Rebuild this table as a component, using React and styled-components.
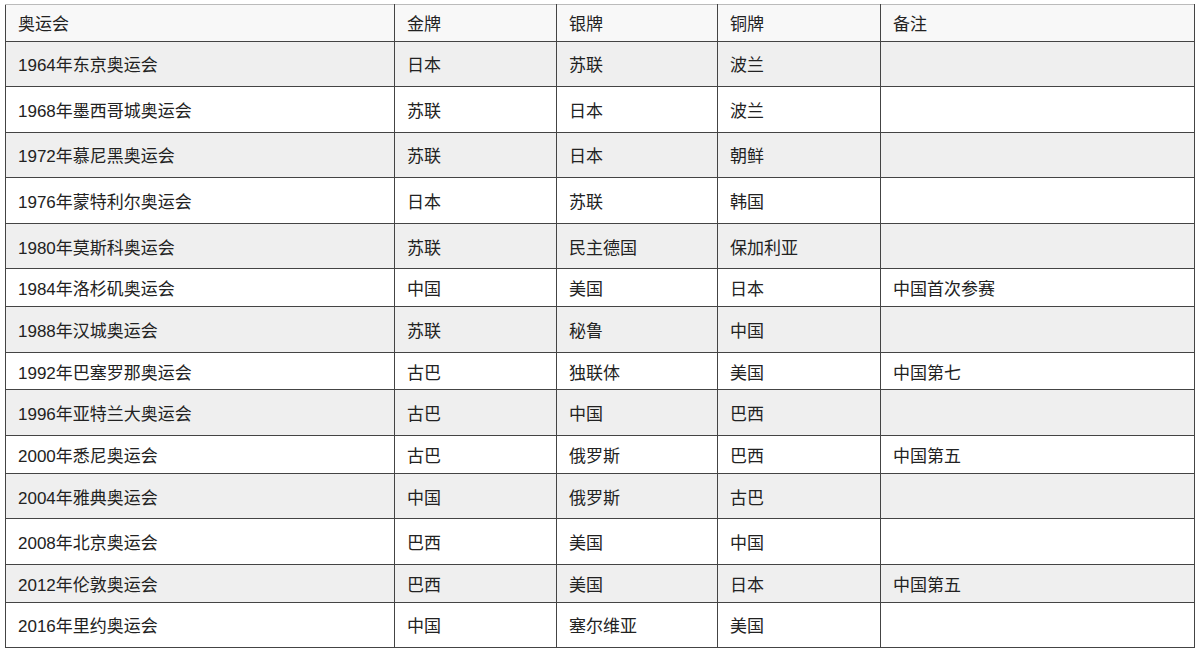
import React from 'react';
import styled, { createGlobalStyle } from 'styled-components';

const GlobalStyle = createGlobalStyle`
  html, body {
    margin: 0;
    padding: 0;
    background: #ffffff;
  }
  body {
    font-family: "Liberation Sans", "Noto Sans CJK SC", sans-serif;
    color: #222222;
  }
`;

const Page = styled.div`
  padding: 4px 6px 0 5px;
`;

const Table = styled.table`
  width: 1189px;
  border-collapse: collapse;
  table-layout: fixed;
  font-size: 17px;
  border: 1px solid #555555;
`;

const HeadRow = styled.tr`
  height: 36.5px;
  background: #f8f8f8;
`;

const Row = styled.tr`
  height: ${(p) => (p.$tall ? '45.6px' : '37.7px')};
  background: ${(p) => (p.$striped ? '#efefef' : '#ffffff')};
`;

const Th = styled.th`
  text-align: left;
  font-weight: 400;
  padding: 0 12px;
  border: 1px solid #444444;
  border-top-color: #bbbbbb;
  color: #222222;
`;

const Td = styled.td`
  padding: 0 12px;
  border: 1px solid #444444;
  color: #222222;
  white-space: nowrap;
`;

const columns = [
  { label: '奥运会', width: 389 },
  { label: '金牌', width: 162 },
  { label: '银牌', width: 161 },
  { label: '铜牌', width: 163 },
  { label: '备注', width: 314 },
];

const games = [
  ['1964年东京奥运会', '日本', '苏联', '波兰', ''],
  ['1968年墨西哥城奥运会', '苏联', '日本', '波兰', ''],
  ['1972年慕尼黑奥运会', '苏联', '日本', '朝鲜', ''],
  ['1976年蒙特利尔奥运会', '日本', '苏联', '韩国', ''],
  ['1980年莫斯科奥运会', '苏联', '民主德国', '保加利亚', ''],
  ['1984年洛杉矶奥运会', '中国', '美国', '日本', '中国首次参赛'],
  ['1988年汉城奥运会', '苏联', '秘鲁', '中国', ''],
  ['1992年巴塞罗那奥运会', '古巴', '独联体', '美国', '中国第七'],
  ['1996年亚特兰大奥运会', '古巴', '中国', '巴西', ''],
  ['2000年悉尼奥运会', '古巴', '俄罗斯', '巴西', '中国第五'],
  ['2004年雅典奥运会', '中国', '俄罗斯', '古巴', ''],
  ['2008年北京奥运会', '巴西', '美国', '中国', ''],
  ['2012年伦敦奥运会', '巴西', '美国', '日本', '中国第五'],
  ['2016年里约奥运会', '中国', '塞尔维亚', '美国', ''],
];

const App = () => {
  return (
    <>
      <GlobalStyle />
      <Page>
        <Table>
          <colgroup>
            {columns.map((c) => (
              <col key={c.label} style={{ width: c.width }} />
            ))}
          </colgroup>
          <thead>
            <HeadRow>
              {columns.map((c) => (
                <Th key={c.label}>{c.label}</Th>
              ))}
            </HeadRow>
          </thead>
          <tbody>
            {games.map((row, i) => (
              <Row key={row[0]} $striped={i % 2 === 0} $tall={!row[4]}>
                {row.map((cell, j) => (
                  <Td key={j}>{cell}</Td>
                ))}
              </Row>
            ))}
          </tbody>
        </Table>
      </Page>
    </>
  );
};

export default App;
